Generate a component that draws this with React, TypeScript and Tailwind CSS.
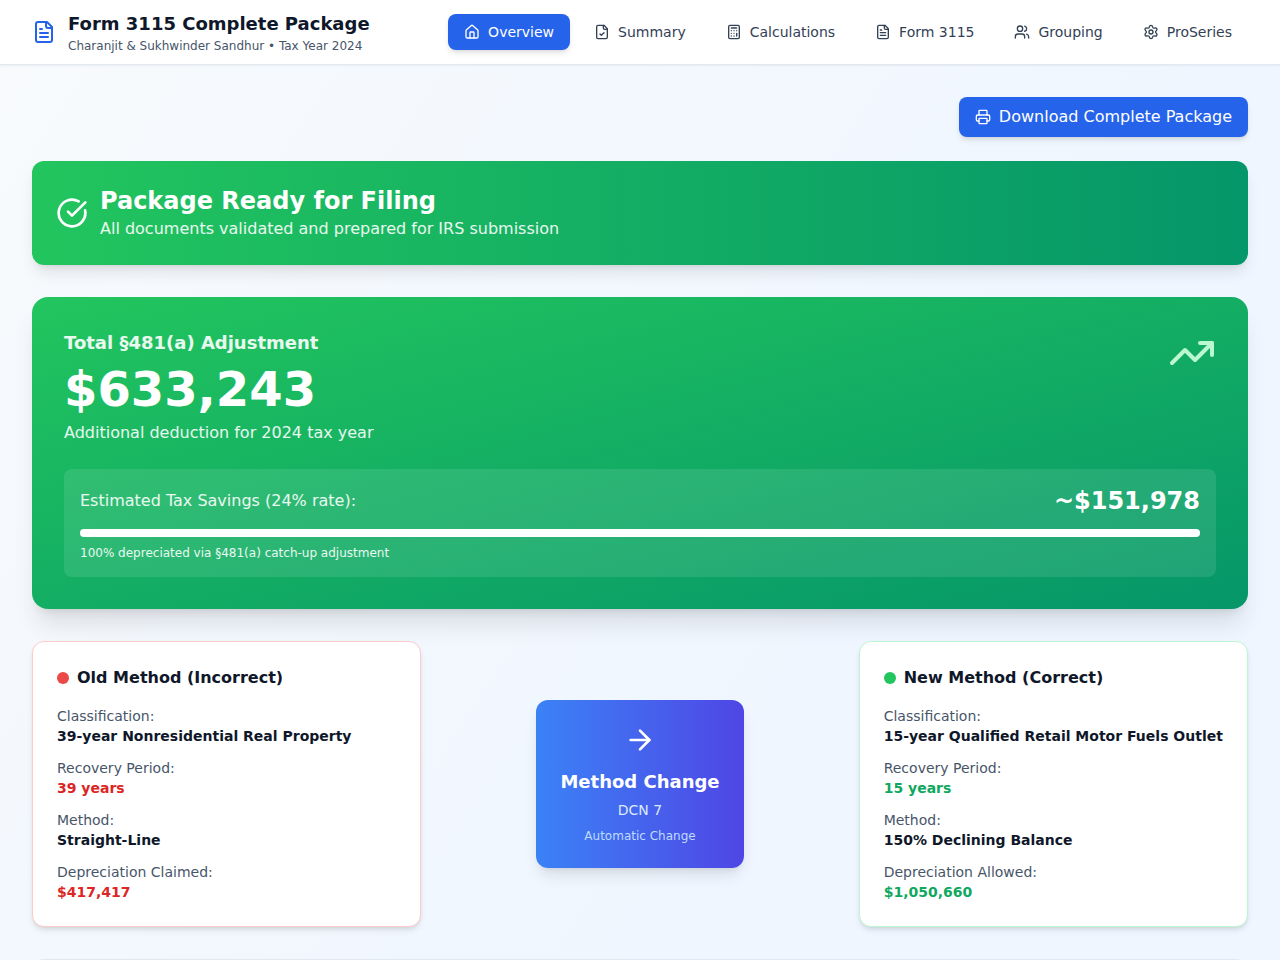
import { ArrowRight, Calculator, CircleCheckBig, House, Printer, Settings, TrendingUp, Users } from "lucide-react";
import { useState, type ComponentType, type ReactNode } from "react";

type IconProps = { className?: string };

function FileIcon({ className = "", children }: IconProps & { children: ReactNode }) {
  return (
    <svg
      viewBox="0 0 24 24"
      fill="none"
      stroke="currentColor"
      strokeWidth="2"
      strokeLinecap="round"
      strokeLinejoin="round"
      aria-hidden="true"
      className={className}
    >
      <path d="M15 2H6a2 2 0 0 0-2 2v16a2 2 0 0 0 2 2h12a2 2 0 0 0 2-2V7Z" />
      <path d="M14 2v4a2 2 0 0 0 2 2h4" />
      {children}
    </svg>
  );
}

function FileText({ className }: IconProps) {
  return (
    <FileIcon className={className}>
      <path d="M10 9H8" />
      <path d="M16 13H8" />
      <path d="M16 17H8" />
    </FileIcon>
  );
}

function FileCheck({ className }: IconProps) {
  return (
    <FileIcon className={className}>
      <path d="m9 15 2 2 4-4" />
    </FileIcon>
  );
}

type Tab = { id: string; label: string; icon: ComponentType<IconProps> };

const TABS: Tab[] = [
  { id: "overview", label: "Overview", icon: House },
  { id: "summary", label: "Summary", icon: FileCheck },
  { id: "calculations", label: "Calculations", icon: Calculator },
  { id: "form", label: "Form 3115", icon: FileText },
  { id: "grouping", label: "Grouping", icon: Users },
  { id: "proseries", label: "ProSeries", icon: Settings },
];

type MethodRow = { label: string; value: string; highlight?: boolean };

const OLD_METHOD: MethodRow[] = [
  { label: "Classification:", value: "39-year Nonresidential Real Property" },
  { label: "Recovery Period:", value: "39 years", highlight: true },
  { label: "Method:", value: "Straight-Line" },
  { label: "Depreciation Claimed:", value: "$417,417", highlight: true },
];

const NEW_METHOD: MethodRow[] = [
  { label: "Classification:", value: "15-year Qualified Retail Motor Fuels Outlet" },
  { label: "Recovery Period:", value: "15 years", highlight: true },
  { label: "Method:", value: "150% Declining Balance" },
  { label: "Depreciation Allowed:", value: "$1,050,660", highlight: true },
];

function Header() {
  const [active, setActive] = useState("overview");

  return (
    <header className="sticky top-0 z-10 border-b border-[#e2e8f0] bg-white shadow-xs">
      <div className="mx-auto flex h-16 max-w-7xl items-center justify-between px-8">
        <div className="flex items-center gap-3">
          <FileText className="size-6 text-[#2563eb]" />
          <div>
            <h1 className="text-lg font-bold text-[#0f172a]">Form 3115 Complete Package</h1>
            <p className="text-xs text-[#475569]">Charanjit &amp; Sukhwinder Sandhur • Tax Year 2024</p>
          </div>
        </div>
        <nav className="flex gap-2">
          {TABS.map(({ id, label, icon: Icon }) => (
            <button
              key={id}
              type="button"
              onClick={() => setActive(id)}
              className={`flex items-center gap-2 rounded-lg px-4 py-2 text-sm font-medium whitespace-nowrap transition ${
                active === id ? "bg-[#2563eb] text-white shadow-md" : "text-[#334155] hover:bg-[#f1f5f9]"
              }`}
            >
              <Icon className="size-4" />
              {label}
            </button>
          ))}
        </nav>
      </div>
    </header>
  );
}

function StatusBanner() {
  return (
    <section className="flex items-center gap-3 rounded-xl bg-linear-to-r/srgb from-[#22c55e] to-[#059669] p-6 text-white shadow-lg">
      <CircleCheckBig className="size-8" />
      <div>
        <h2 className="text-2xl font-bold">Package Ready for Filing</h2>
        <p className="text-white/90">All documents validated and prepared for IRS submission</p>
      </div>
    </section>
  );
}

function AdjustmentCard() {
  return (
    <section className="rounded-2xl bg-linear-to-br/srgb from-[#22c55e] to-[#059669] p-8 text-white shadow-xl">
      <div className="flex items-start justify-between">
        <div>
          <h3 className="text-lg font-semibold text-white/90">Total §481(a) Adjustment</h3>
          <p className="mt-2 text-5xl font-bold">$633,243</p>
          <p className="mt-2 text-white/90">Additional deduction for 2024 tax year</p>
        </div>
        <TrendingUp className="size-12 text-[#bbf7d0]" />
      </div>
      <div className="mt-6 rounded-lg bg-white/10 p-4">
        <div className="flex items-center justify-between">
          <span className="text-white/90">Estimated Tax Savings (24% rate):</span>
          <span className="text-2xl font-bold">~$151,978</span>
        </div>
        <div className="mt-3 h-2 rounded-full bg-white/20">
          <div className="h-2 w-full rounded-full bg-white" />
        </div>
        <p className="mt-2 text-xs text-white/90">100% depreciated via §481(a) catch-up adjustment</p>
      </div>
    </section>
  );
}

type MethodCardProps = {
  title: string;
  rows: MethodRow[];
  border: string;
  dot: string;
  accent: string;
};

function MethodCard({ title, rows, border, dot, accent }: MethodCardProps) {
  return (
    <div className={`rounded-xl border bg-white p-6 shadow-md ${border}`}>
      <h4 className="mb-4 flex items-center gap-2 font-semibold text-[#0f172a]">
        <span className={`size-3 rounded-full ${dot}`} />
        {title}
      </h4>
      <dl className="space-y-3 text-sm">
        {rows.map((row) => (
          <div key={row.label}>
            <dt className="text-[#475569]">{row.label}</dt>
            <dd className={`font-semibold ${row.highlight ? accent : "text-[#0f172a]"}`}>{row.value}</dd>
          </div>
        ))}
      </dl>
    </div>
  );
}

export default function App() {
  return (
    <div className="min-h-screen bg-linear-to-br/srgb from-[#f8fafc] via-[#eff6ff] to-[#eff6ff] font-['DejaVu_Sans',sans-serif]">
      <Header />
      <main className="mx-auto max-w-7xl px-8 py-8">
        <div className="mb-6 flex justify-end">
          <button
            type="button"
            className="flex items-center gap-2 rounded-lg bg-[#2563eb] px-4 py-2 font-medium text-white shadow-md transition hover:bg-[#1d4ed8]"
          >
            <Printer className="size-4" />
            Download Complete Package
          </button>
        </div>
        <div className="space-y-8">
          <StatusBanner />
          <AdjustmentCard />
          <section className="grid grid-cols-3 gap-6">
            <MethodCard
              title="Old Method (Incorrect)"
              rows={OLD_METHOD}
              border="border-[#fecaca]"
              dot="bg-[#eb4848]"
              accent="text-[#dc2626]"
            />
            <div className="flex items-center justify-center">
              <div className="rounded-xl bg-linear-to-r/srgb from-[#3b82f6] to-[#4f46e5] p-6 text-center text-white shadow-lg">
                <ArrowRight className="mx-auto mb-3 size-8" />
                <p className="text-lg font-bold">Method Change</p>
                <p className="mt-1 text-sm text-[#dbeafe]">DCN 7</p>
                <p className="mt-2 text-xs text-[#bfdbfe]">Automatic Change</p>
              </div>
            </div>
            <MethodCard
              title="New Method (Correct)"
              rows={NEW_METHOD}
              border="border-[#bbf7d0]"
              dot="bg-[#22c55e]"
              accent="text-[#10a85f]"
            />
          </section>
          <section className="min-h-screen rounded-xl border border-[#e2e8f0] bg-white shadow-md" />
        </div>
      </main>
    </div>
  );
}
